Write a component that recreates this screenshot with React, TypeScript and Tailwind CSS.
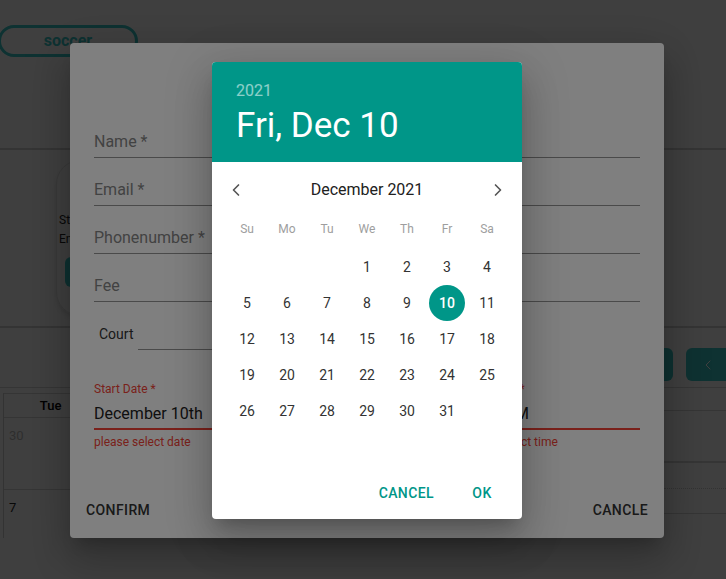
import { ChevronLeft, ChevronRight } from 'lucide-react'

const weekLabels = ['Su', 'Mo', 'Tu', 'We', 'Th', 'Fr', 'Sa']

function buildWeeks() {
  const cells: (number | null)[] = [null, null, null]
  for (let d = 1; d <= 31; d++) cells.push(d)
  while (cells.length % 7 !== 0) cells.push(null)
  const weeks: (number | null)[][] = []
  for (let i = 0; i < cells.length; i += 7) weeks.push(cells.slice(i, i + 7))
  return weeks
}

function Field({ label }: { label: string }) {
  return (
    <div className="flex h-12 items-end">
      <div className="w-full border-b border-[#949494] pb-[6px] text-[16px] leading-[19px] text-[#858585]">
        {label}
      </div>
    </div>
  )
}

function DateField({ label, value, helper }: { label: string; value: string; helper: string }) {
  return (
    <div className="flex flex-col">
      <div className="h-4 pt-[1px] text-[12px] leading-[14px] text-[#f44336]">{label}</div>
      <div className="border-b-2 border-[#f44336] pt-[7px] pb-[5px] text-[16px] leading-[19px] text-[#212121]">
        {value}
      </div>
      <div className="mt-[3px] text-[12px] leading-[18px] text-[#f44336]">{helper}</div>
    </div>
  )
}

function BackgroundPage() {
  const cols = ['Tue', 'Wed', 'Thu', 'Fri', 'Sat', 'Sun', 'Mon']
  return (
    <div className="flex flex-col">
      <div className="h-[148px] pt-[25px]">
        <button className="-ml-[2px] flex h-[32px] w-[140px] items-center justify-center rounded-full border-[3px] border-[#38c8c8] text-[16px] font-bold text-[#38c8c8]">
          soccer
        </button>
      </div>

      <div className="flex h-[180px] items-center border-y-2 border-[#d2d2d2] pl-[56px]">
        <div className="flex h-[156px] w-[220px] flex-col justify-center rounded-[24px] border border-[#e6e6e6] pl-[2px] shadow-md">
          <div className="mt-[22px] text-[12px] leading-[19px] text-[#222]">Start: 10:00</div>
          <div className="text-[12px] leading-[19px] text-[#222]">End: 12:00</div>
          <button className="mt-[8px] ml-[6px] h-[30px] w-[80px] rounded-md bg-[#38c8c8] text-[12px] text-white">
            BOOK
          </button>
        </div>
      </div>

      <div className="flex h-[59px] items-start justify-end gap-[13px] pt-[20px]">
        <button className="h-[33px] w-[48px] rounded-md bg-[#38c8c8]" />
        <button className="flex h-[33px] w-[40px] items-center rounded-l-md bg-[#38c8c8] pl-[14px]">
          <ChevronLeft size={16} strokeWidth={1.5} className="text-white" />
        </button>
      </div>

      <div className="flex border-t border-[#d6d6d6]">
        <div className="w-[664px] pt-[5px] pl-[3px]">
          <div className="grid grid-cols-7 border-l border-[#cfcfcf]">
            {cols.map((c) => (
              <div
                key={c}
                className="flex h-[25px] items-center justify-center border-y border-r border-[#d6d6d6] text-[13px] font-medium text-black"
              >
                {c}
              </div>
            ))}
            {['30', '1', '2', '3', '4', '5', '6'].map((d, i) => (
              <div key={d} className="h-[72px] border-r border-b border-[#d6d6d6] pt-[8px] pl-[5px] text-[13px]">
                <span className={i === 0 ? 'text-[#bbb]' : 'text-[#222]'}>{d}</span>
              </div>
            ))}
            {['7', '8', '9', '10', '11', '12', '13'].map((d) => (
              <div key={d} className="h-[48px] pt-[8px] pl-[5px] text-[13px] text-[#222]">
                {d}
              </div>
            ))}
          </div>
        </div>
        <div className="flex flex-1 flex-col">
          <div className="h-[23px] border-b border-[#d6d6d6]" />
          <div className="h-[52px] border-b-2 border-[#d6d6d6]" />
          <div className="h-[26px] border-b border-dotted border-[#cfcfcf]" />
          <div className="h-[25px] border-b border-[#d6d6d6]" />
        </div>
      </div>
    </div>
  )
}

export default function App() {
  const weeks = buildWeeks()

  return (
    <div className="relative h-[579px] w-[726px] overflow-hidden bg-white font-['Roboto','Liberation_Sans',sans-serif]">
      <BackgroundPage />

      <div className="absolute inset-0 bg-black/50" />

      <div className="absolute top-[43px] left-[70px] flex h-[495px] w-[594px] flex-col rounded bg-white shadow-[0_11px_15px_-7px_rgba(0,0,0,0.2),0_24px_38px_3px_rgba(0,0,0,0.14),0_9px_46px_8px_rgba(0,0,0,0.12)]">
        <div className="px-6 pt-[67px]">
          <Field label="Name *" />
          <Field label="Email *" />
          <Field label="Phonenumber *" />
          <Field label="Fee" />
          <div className="flex h-12 items-end">
            <span className="mr-[5px] mb-[8px] ml-[5px] text-[14px] leading-4 text-[#333]">Court</span>
            <div className="h-8 w-[200px] border-b border-[#949494]" />
          </div>
          <div className="mt-[31px] flex gap-4">
            <div className="flex-1">
              <DateField label="Start Date *" value="December 10th" helper="please select date" />
            </div>
            <div className="w-[179px]">
              <DateField label="Start Time *" value="12:00 PM" helper="please select time" />
            </div>
          </div>
        </div>
        <div className="mt-auto flex justify-between px-2 pb-[10px]">
          <button className="h-9 px-2 text-[14px] font-medium tracking-[0.4px] text-[#333]">CONFIRM</button>
          <button className="h-9 px-2 text-[14px] font-medium tracking-[0.4px] text-[#333]">CANCLE</button>
        </div>
      </div>

      <div className="absolute inset-0 bg-black/50" />

      <div className="absolute top-[62px] left-[212px] w-[310px] overflow-hidden rounded bg-white shadow-[0_11px_15px_-7px_rgba(0,0,0,0.2),0_24px_38px_3px_rgba(0,0,0,0.14),0_9px_46px_8px_rgba(0,0,0,0.12)]">
        <div className="flex h-[100px] flex-col justify-center bg-[#009688] pl-6">
          <div className="text-[16px] leading-[28px] text-white/55">2021</div>
          <div className="text-[35px] leading-[42px] text-white">Fri, Dec 10</div>
        </div>

        <div className="mt-1 mb-[7px] flex h-12 items-center justify-between">
          <button className="flex h-12 w-12 items-center justify-center text-[#555]">
            <ChevronLeft size={20} strokeWidth={2} />
          </button>
          <div className="text-[16px] text-[#212121]">December 2021</div>
          <button className="flex h-12 w-12 items-center justify-center text-[#555]">
            <ChevronRight size={20} strokeWidth={2} />
          </button>
        </div>

        <div className="flex justify-center">
          {weekLabels.map((w) => (
            <div key={w} className="mx-0.5 w-9 text-center text-[12px] leading-4 text-[#9e9e9e]">
              {w}
            </div>
          ))}
        </div>

        <div className="mt-3 min-h-[218px]">
          {weeks.map((week, wi) => (
            <div key={wi} className="flex justify-center">
              {week.map((d, di) => (
                <div
                  key={di}
                  className={
                    d === 10
                      ? 'mx-0.5 flex h-9 w-9 items-center justify-center rounded-full bg-[#009688] text-[14px] font-medium text-white'
                      : 'mx-0.5 flex h-9 w-9 items-center justify-center text-[14px] text-[#333]'
                  }
                >
                  {d ?? ''}
                </div>
              ))}
            </div>
          ))}
        </div>

        <div className="flex justify-end gap-2 p-2">
          <button className="h-9 px-2 text-[14px] font-medium tracking-[0.4px] text-[#009688]">CANCEL</button>
          <button className="h-9 min-w-16 px-2 text-[14px] font-medium tracking-[0.4px] text-[#009688]">OK</button>
        </div>
      </div>
    </div>
  )
}
